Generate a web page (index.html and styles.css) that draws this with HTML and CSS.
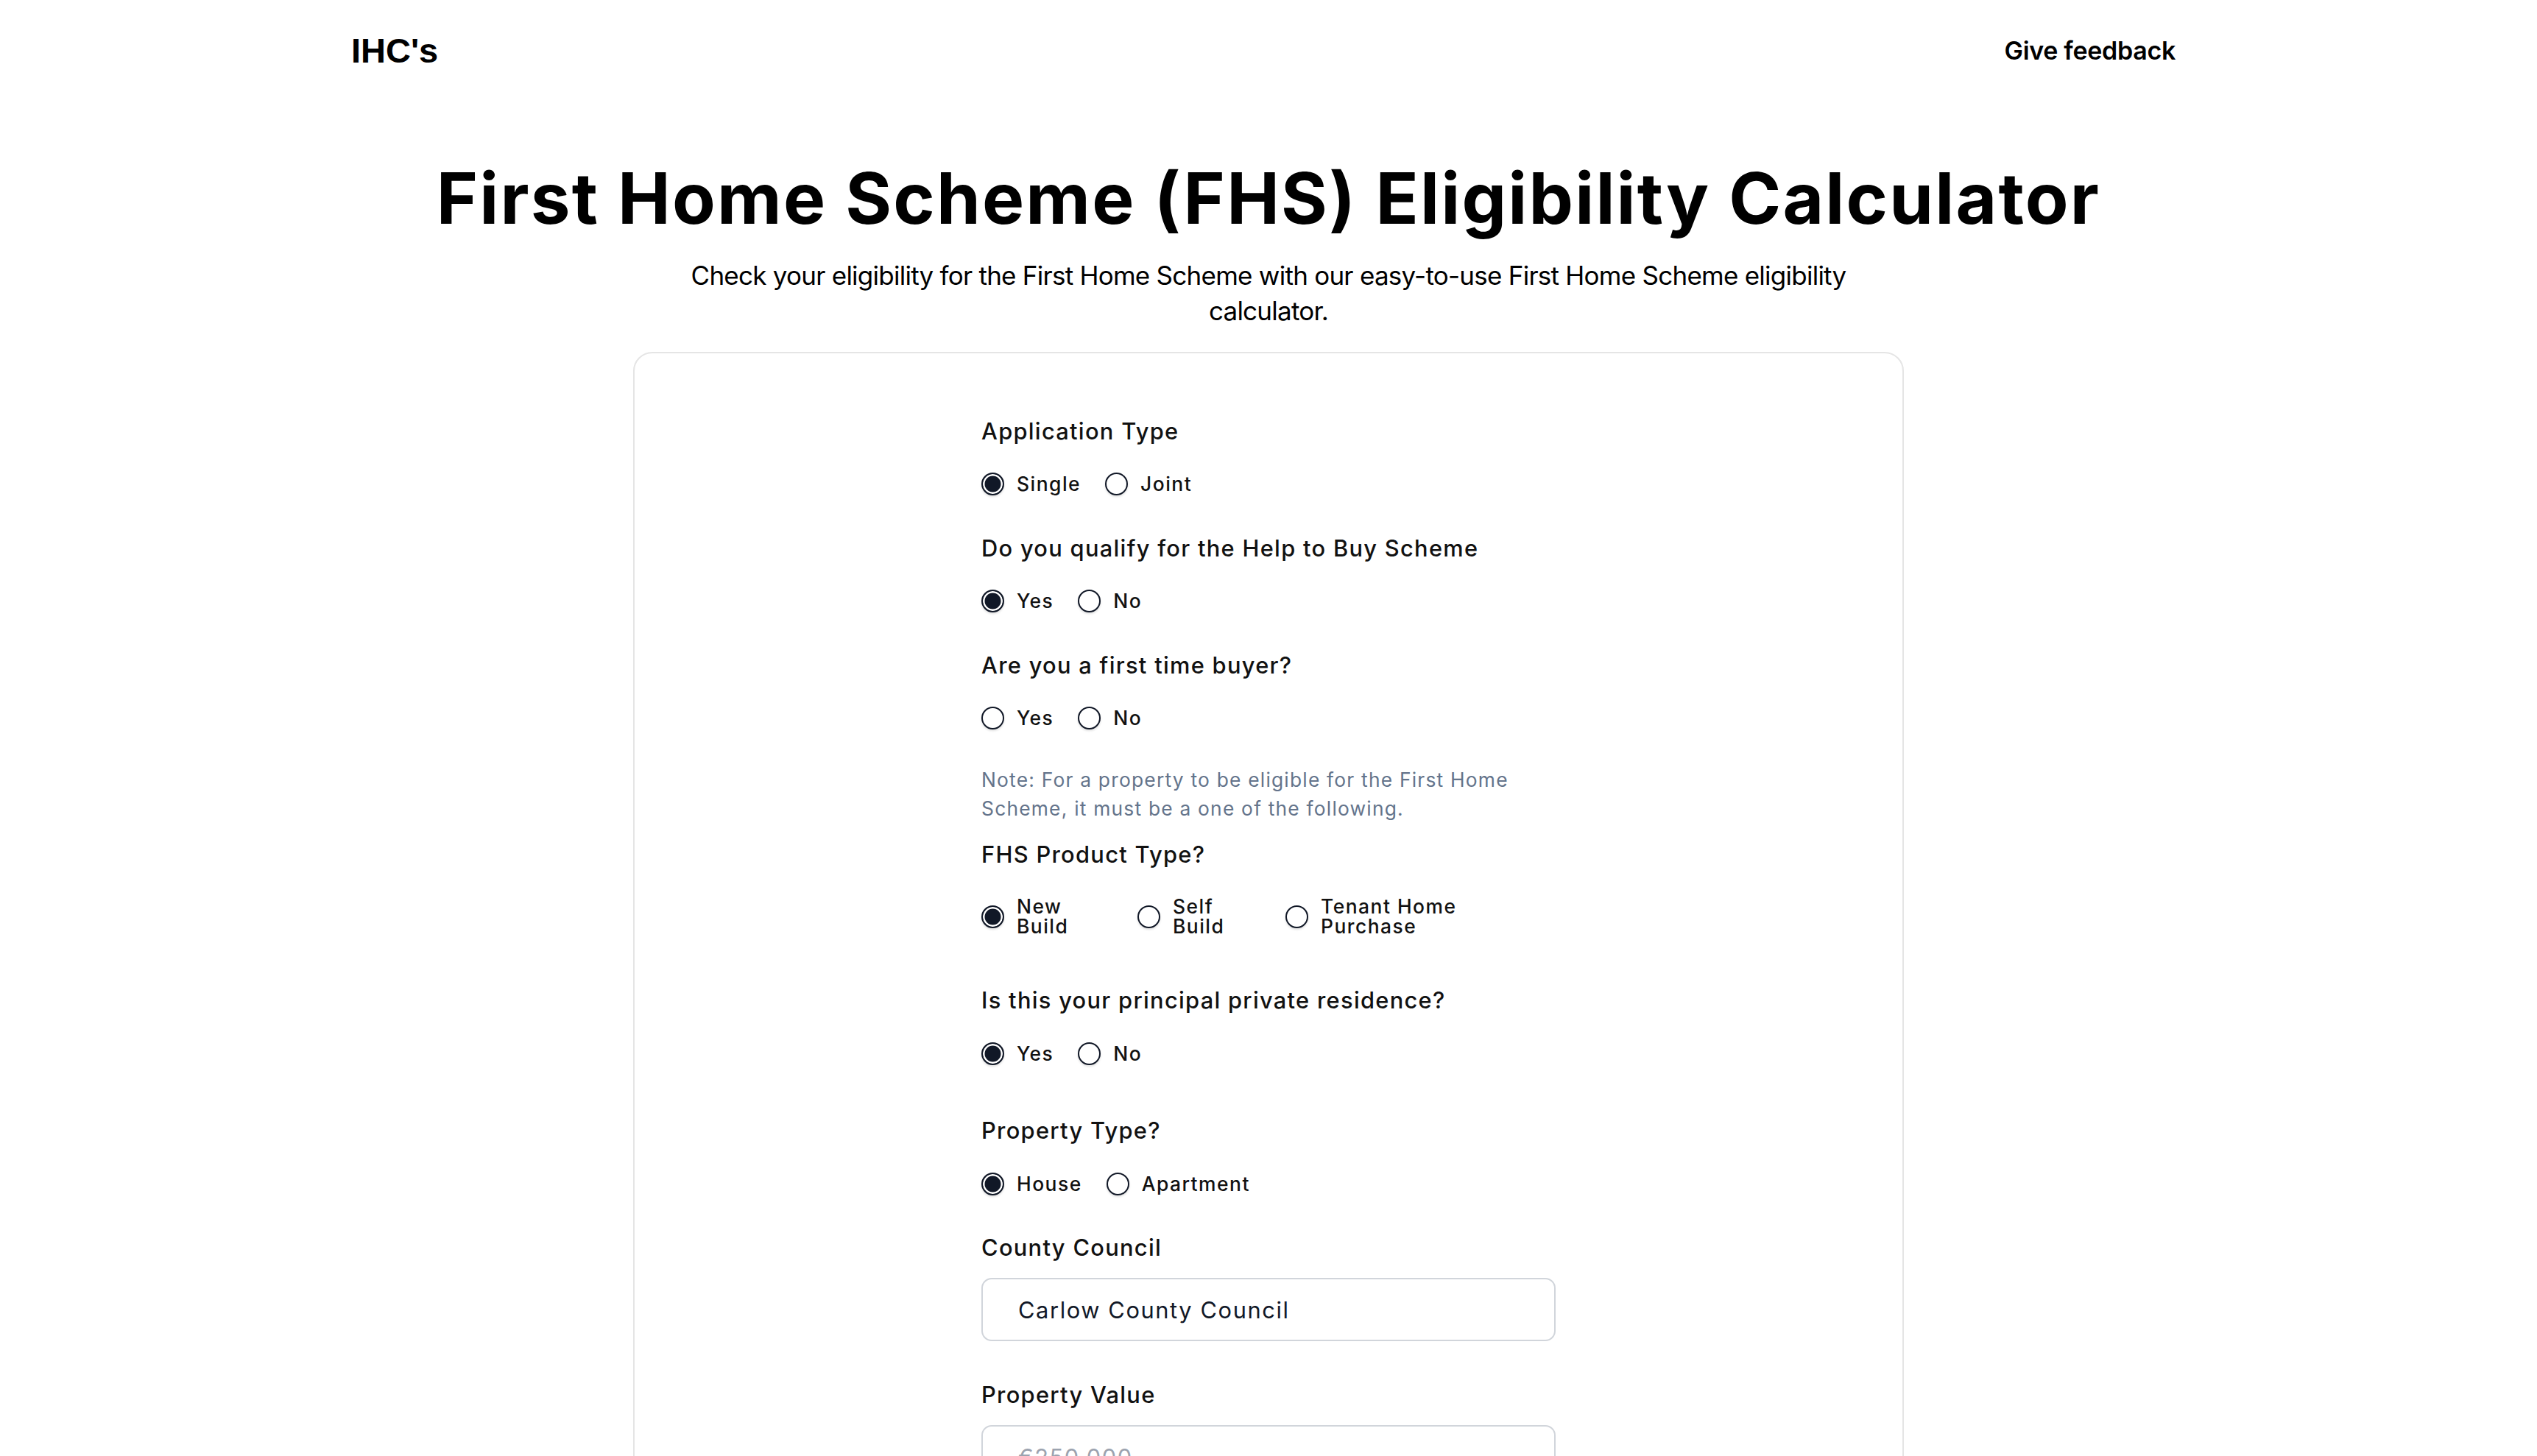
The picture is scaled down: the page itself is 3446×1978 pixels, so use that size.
FILE: index.html
```html
<!DOCTYPE html>
<html lang="en">
<head>
<meta charset="utf-8">
<title>First Home Scheme (FHS) Eligibility Calculator</title>
<link rel="stylesheet" href="styles.css">
</head>
<body>
<header class="site-header">
  <div class="logo">IHC's</div>
  <a class="feedback" href="#">Give feedback</a>
</header>
<main class="main">
  <h1 class="title">First Home Scheme (FHS) Eligibility Calculator</h1>
  <p class="subtitle">Check your eligibility for the First Home Scheme with our easy-to-use First Home Scheme eligibility calculator.</p>
  <section class="card">
    <form class="form">
      <div class="field f1">
        <div class="label">Application Type</div>
        <div class="options">
          <label class="option"><input type="radio" name="app" checked><span>Single</span></label>
          <label class="option"><input type="radio" name="app"><span>Joint</span></label>
        </div>
      </div>
      <div class="field f2">
        <div class="label">Do you qualify for the Help to Buy Scheme</div>
        <div class="options">
          <label class="option"><input type="radio" name="htb" checked><span>Yes</span></label>
          <label class="option"><input type="radio" name="htb"><span>No</span></label>
        </div>
      </div>
      <div class="field f2">
        <div class="label">Are you a first time buyer?</div>
        <div class="options">
          <label class="option"><input type="radio" name="ftb"><span>Yes</span></label>
          <label class="option"><input type="radio" name="ftb"><span>No</span></label>
        </div>
      </div>
      <p class="note">Note: For a property to be eligible for the First Home Scheme, it must be a one of the following.</p>
      <div class="field f-fhs">
        <div class="label">FHS Product Type?</div>
        <div class="options options-wrap">
          <label class="option w1"><input type="radio" name="fhs" checked><span class="txt-narrow">New Build</span></label>
          <label class="option w2"><input type="radio" name="fhs"><span class="txt-narrow">Self Build</span></label>
          <label class="option"><input type="radio" name="fhs"><span class="txt-wide">Tenant Home Purchase</span></label>
        </div>
      </div>
      <div class="field f-ppr">
        <div class="label">Is this your principal private residence?</div>
        <div class="options">
          <label class="option"><input type="radio" name="ppr" checked><span>Yes</span></label>
          <label class="option"><input type="radio" name="ppr"><span>No</span></label>
        </div>
      </div>
      <div class="field f-prop">
        <div class="label">Property Type?</div>
        <div class="options">
          <label class="option"><input type="radio" name="ptype" checked><span>House</span></label>
          <label class="option"><input type="radio" name="ptype"><span>Apartment</span></label>
        </div>
      </div>
      <div class="field f2">
        <div class="label">County Council</div>
        <input class="text-input" type="text" value="Carlow County Council" readonly>
      </div>
      <div class="field f-value">
        <div class="label">Property Value</div>
        <input class="text-input" type="text" placeholder="€250,000">
      </div>
      <div class="field f2">
        <div class="label">Household Income</div>
        <input class="text-input" type="text" placeholder="€80,000">
      </div>
    </form>
  </section>
</main>
</body>
</html>
```
FILE: styles.css
```css
* { box-sizing: border-box; }

html, body {
  margin: 0;
  padding: 0;
  background: #ffffff;
}

body {
  font-family: "Inter", "Open Sans", sans-serif;
  color: #111111;
}

.site-header {
  height: 136px;
  display: flex;
  align-items: center;
  justify-content: space-between;
  padding: 0 491px 0 477px;
}

.logo {
  font-family: "Liberation Sans", Arial, sans-serif;
  font-weight: 700;
  font-size: 47px;
  color: #000;
}

.feedback {
  font-size: 34px;
  font-weight: 600;
  color: #000;
  text-decoration: none;
  letter-spacing: -0.3px;
}

.main {
  display: flex;
  flex-direction: column;
  align-items: center;
}

.title {
  margin: 75px 0 0;
  font-size: 96px;
  line-height: 116px;
  font-weight: 700;
  color: #000;
  letter-spacing: 2.2px;
  text-align: center;
}

.subtitle {
  margin: 23px 0 0;
  max-width: 1690px;
  font-size: 35px;
  line-height: 48.4px;
  text-align: center;
  color: #000;
  letter-spacing: -0.75px;
}

.card {
  margin-top: 31px;
  width: 1726px;
  border: 2px solid #e5e5e5;
  border-radius: 26px;
  padding: 84px 0 160px;
  display: flex;
  justify-content: center;
}

.form {
  width: 780px;
  display: flex;
  flex-direction: column;
}

.label {
  font-size: 30.8px;
  line-height: 44px;
  font-weight: 500;
  color: #111;
  letter-spacing: 1.3px;
}

.field.f2 { margin-top: 43px; }
.field.f-fhs { margin-top: 20px; }
.field.f-ppr { margin-top: 65px; }
.field.f-prop { margin-top: 61px; }
.field.f-value { margin-top: 51px; }

.options {
  margin-top: 28px;
  height: 44px;
  display: flex;
  align-items: center;
  gap: 33px;
}

.options-wrap {
  margin-top: 35px;
  height: 54px;
  gap: 0;
}

.option {
  display: flex;
  align-items: center;
  gap: 17px;
  font-size: 26.4px;
  font-weight: 500;
  color: #111;
  letter-spacing: 1.5px;
}

.option span {
  line-height: 27px;
}

.option.w1 { width: 212px; }
.option.w2 { width: 201px; }

.txt-narrow { width: 95px; }
.txt-wide { width: 215px; }

.option input {
  appearance: none;
  -webkit-appearance: none;
  margin: 0;
  width: 31px;
  height: 31px;
  flex: none;
  border-radius: 50%;
  border: 2px solid #111827;
  background: #fff;
  box-shadow: 0 2px 3px rgba(0, 0, 0, 0.12);
}

.option input:checked {
  background: #111827;
  box-shadow: inset 0 0 0 2.5px #fff, 0 2px 3px rgba(0, 0, 0, 0.12);
}

.note {
  margin: 42px 0 0;
  font-size: 26.4px;
  line-height: 39.6px;
  color: #64748b;
  letter-spacing: 1.2px;
}

.text-input {
  display: block;
  margin-top: 19px;
  width: 100%;
  height: 86px;
  padding: 0 0 0 48px;
  border: 2px solid #d1d5db;
  border-radius: 14px;
  font-family: inherit;
  font-size: 30.8px;
  color: #111827;
  background: #fff;
  outline: none;
  letter-spacing: 1.6px;
}

.text-input::placeholder {
  color: #9ca3af;
}
```
